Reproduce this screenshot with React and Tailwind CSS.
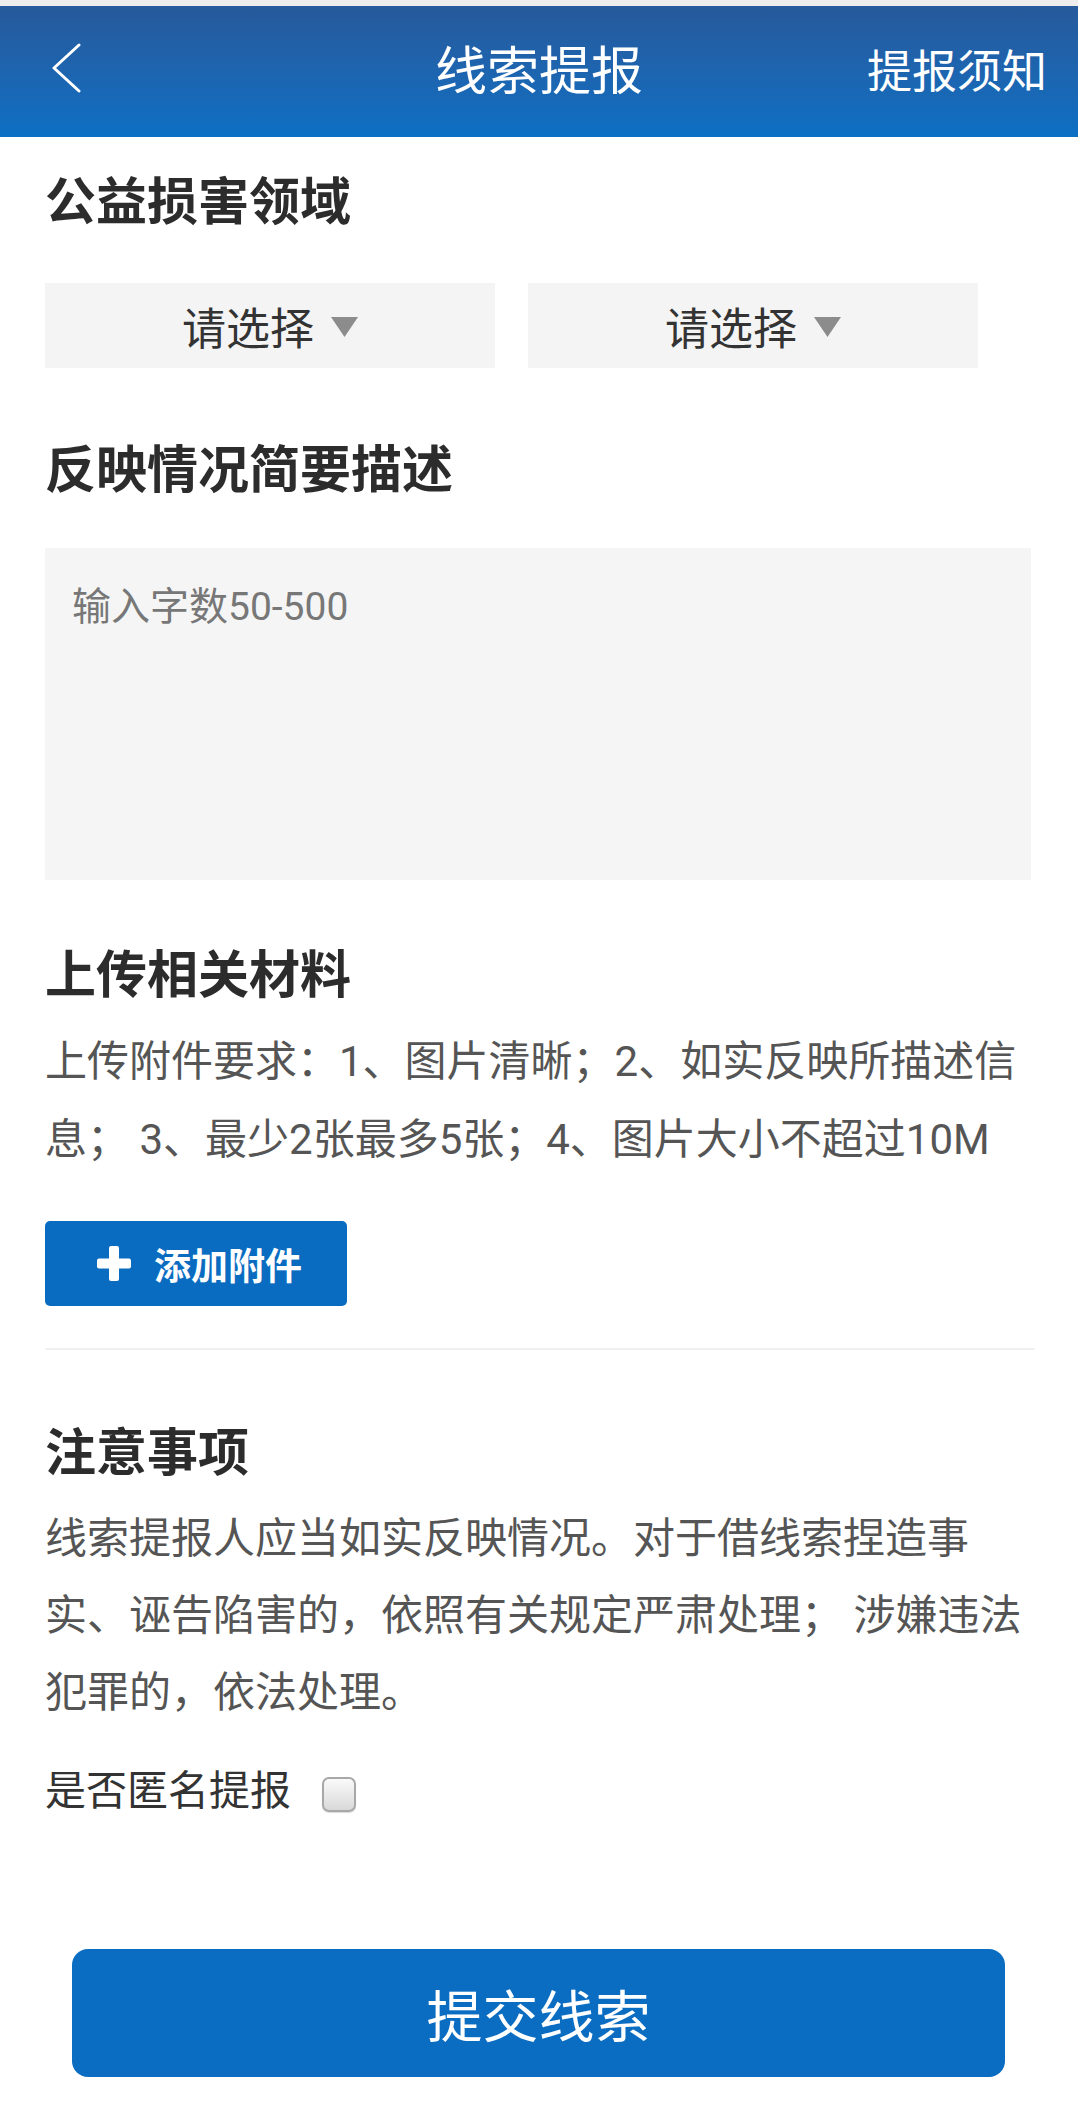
import React from "react";

function Arrow() {
  return (
    <svg width="27" height="20" viewBox="0 0 27 20" className="block">
      <polygon points="0,0 27,0 13.5,20" fill="#8c8c8c" />
    </svg>
  );
}

function Select() {
  return (
    <div className="w-[450px] h-[85px] bg-[#f4f4f4] flex items-center justify-center gap-[17px]">
      <span className="text-[44px] leading-none text-[#333333] pt-[8px]">请选择</span>
      <span className="mt-[3px]"><Arrow /></span>
    </div>
  );
}

export default function App() {
  return (
    <div className="w-[1078px] min-h-[2124px] bg-white font-['Roboto','Noto_Sans_CJK_SC',sans-serif]">
      <div className="h-[6px] bg-[#ededed]" />
      <header className="h-[131px] bg-gradient-to-b from-[#265a9b] to-[#0a6fc4] grid grid-cols-[1fr_auto_1fr] items-center pb-[8px] text-white">
        <div className="pl-[52px]">
          <svg width="30" height="50" viewBox="0 0 30 50" className="block">
            <polyline points="27,2 2,25 27,48" fill="none" stroke="white" strokeWidth="3" strokeLinecap="round" strokeLinejoin="round" />
          </svg>
        </div>
        <div className="text-[52px] leading-none pt-[10px]">线索提报</div>
        <div className="justify-self-end pr-[31px] pt-[9px] text-[45px] leading-none">提报须知</div>
      </header>

      <main className="px-[45px]">
        <h2 className="mt-[36px] text-[51px] leading-[60px] font-bold text-[#2c2c2c]">公益损害领域</h2>
        <div className="mt-[50px] flex gap-[33px]">
          <Select />
          <Select />
        </div>

        <h2 className="mt-[73px] text-[51px] leading-[60px] font-bold text-[#2c2c2c]">反映情况简要描述</h2>
        <div className="mt-[47px] w-[986px] h-[332px] bg-[#f5f5f5] pl-[27px] pt-[40px]">
          <div className="text-[39px] leading-none text-[#777777]">输入字数50-500</div>
        </div>

        <h2 className="mt-[66px] text-[51px] leading-[60px] font-bold text-[#2c2c2c]">上传相关材料</h2>
        <div className="mt-[17px] text-[42px] leading-[78px] text-[#555555] whitespace-nowrap">
          <div>上传附件要求：1、图片清晰；2、如实反映所描述信</div>
          <div>息； 3、最少2张最多5张；4、图片大小不超过10M</div>
        </div>

        <button className="mt-[42px] w-[302px] h-[85px] rounded-[5px] bg-[#0a6cc1] flex items-center pl-[52px] gap-[23px] text-white">
          <svg width="34" height="35" viewBox="0 0 34 35" className="block">
            <rect x="12" y="0" width="10" height="35" rx="2" fill="white" />
            <rect x="0" y="12.5" width="34" height="10" rx="2" fill="white" />
          </svg>
          <span className="text-[37px] leading-none font-bold pt-[7px]">添加附件</span>
        </button>

        <div className="mt-[42px] w-[990px] h-[2px] bg-[#f0f0f0]" />

        <h2 className="mt-[74px] text-[51px] leading-[60px] font-bold text-[#2c2c2c]">注意事项</h2>
        <div className="mt-[16px] text-[42px] leading-[77px] text-[#555555] whitespace-nowrap">
          <div>线索提报人应当如实反映情况。对于借线索捏造事</div>
          <div>实、诬告陷害的，依照有关规定严肃处理； 涉嫌违法</div>
          <div>犯罪的，依法处理。</div>
        </div>

        <div className="mt-[35px] flex items-start h-[50px]">
          <span className="text-[41px] leading-[50px] text-[#333333]">是否匿名提报</span>
          <span className="ml-[31px] mt-[11px] w-[34px] h-[35px] rounded-[7px] border-2 border-[#a8a8a8] bg-gradient-to-b from-[#fafafa] to-[#d9d9d9] shadow-[0_1px_1px_rgba(0,0,0,0.15)]" />
        </div>

        <button className="mt-[133px] ml-[27px] w-[933px] h-[128px] rounded-[16px] bg-[#0a6dc2] flex items-center justify-center text-white">
          <span className="text-[56px] leading-none pt-[10px]">提交线索</span>
        </button>
      </main>
    </div>
  );
}
